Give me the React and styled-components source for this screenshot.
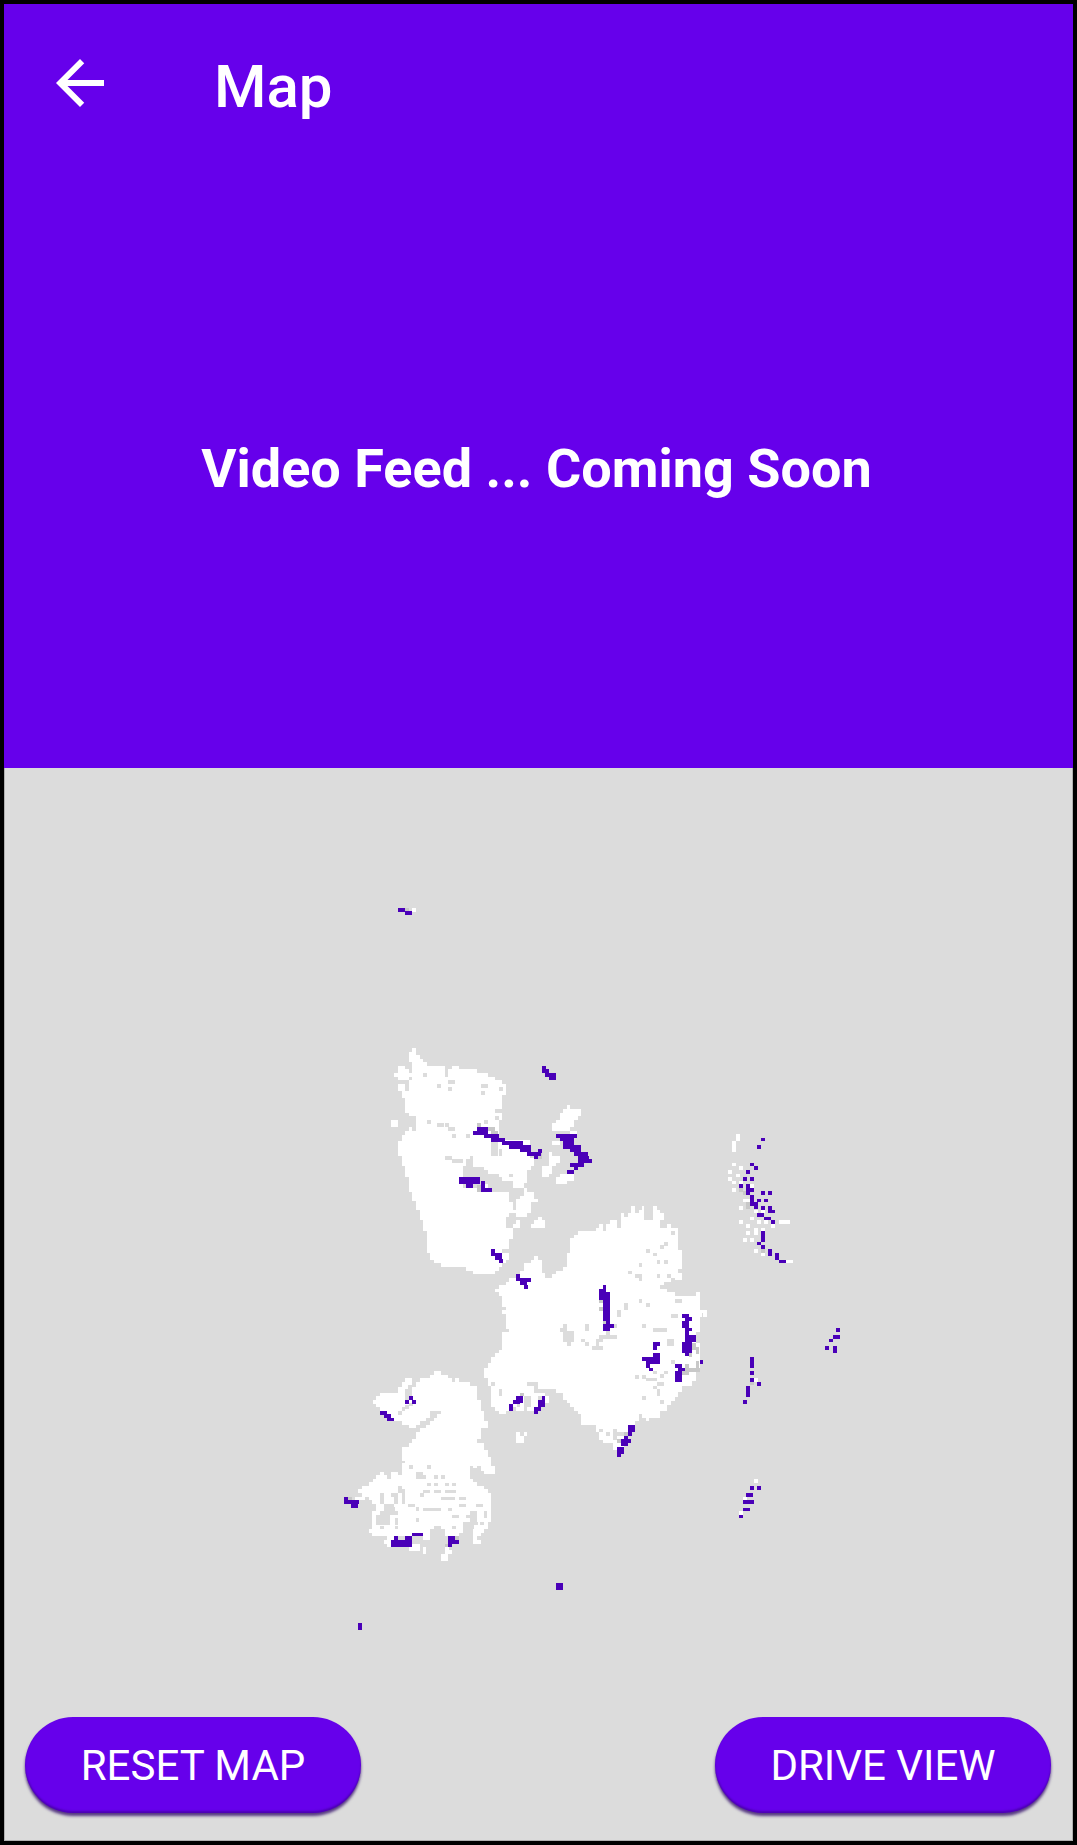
import React from "react";
import styled, { createGlobalStyle } from "styled-components";

const colors = {
  primary: "#6600eb",
  unknown: "#dcdcdc",
  free: "#ffffff",
  wall: "#4a00b8",
  stale: "#c8c8c8",
  edge: "#b0b0b0",
};

const GlobalStyle = createGlobalStyle`
  *, *::before, *::after { box-sizing: border-box; }
  body { margin: 0; background: #000; font-family: Roboto, "Noto Sans", sans-serif; }
`;

const Screen = styled.div`
  display: flex;
  flex-direction: column;
  min-height: 100vh;
  border: 4px solid #000;
  background: ${colors.unknown};
`;

const VideoPanel = styled.section`
  display: flex;
  flex-direction: column;
  background: ${colors.primary};
  color: #fff;
`;

const Toolbar = styled.header`
  display: flex;
  align-items: center;
  gap: 98px;
  height: 158px;
  padding: 0 40px;
`;

const BackButton = styled.button`
  display: flex;
  padding: 0;
  border: 0;
  background: none;
  color: inherit;
  cursor: pointer;
`;

const BackIcon = styled.svg`
  width: 72px;
  height: 72px;
  fill: currentColor;
`;

const Title = styled.h1`
  margin: 0;
  padding-top: 8px;
  font-size: 60px;
  font-weight: 500;
  line-height: 72px;
`;

const Feed = styled.div`
  display: flex;
  justify-content: center;
  height: 606px;
  padding: 275px 24px 0 20px;
`;

const FeedText = styled.p`
  margin: 0;
  font-size: 54px;
  font-weight: 700;
  line-height: 64px;
  text-align: center;
`;

const MapPanel = styled.main`
  position: relative;
  flex: 1;
  box-shadow: inset 1px 0 ${colors.edge}, inset -1px -1px ${colors.edge};
`;

const MapDrawing = styled.svg`
  display: block;
  width: 100%;
  height: auto;
  shape-rendering: crispEdges;
`;

const Actions = styled.div`
  position: absolute;
  right: 22px;
  bottom: 28px;
  left: 21px;
  display: flex;
  justify-content: space-between;
`;

const ActionButton = styled.button`
  width: 336px;
  height: 96px;
  padding: 2px 0 0;
  border: 0;
  border-radius: 48px;
  background: ${colors.primary};
  box-shadow: 0 3px 3px rgba(40, 0, 100, 0.75), inset 0 -2px 2px rgba(40, 0, 100, 0.4);
  color: #fff;
  font: 400 42px/94px Roboto, "Noto Sans", sans-serif;
  text-transform: uppercase;
  cursor: pointer;
`;

/* Each scan lists its free outline and single cells as "x y columns rows". */
const CELL = 10.7;

const toPath = (list) =>
  list
    .trim()
    .split(/\s*,\s*/)
    .map((item) => {
      const [x, y, w = 1, h = 1] = item.split(" ").map(Number);
      const width = (w * CELL).toFixed(1);
      return `M${x} ${y}h${width}v${(h * CELL).toFixed(1)}h-${width}z`;
    })
    .join("");

const scans = [
  {
    name: "north",
    x: 370,
    y: 1030,
    outline:
      "M127 55H138V75H150V86H160V97H171V108H225V140H235V118H246V108H267V118H321V129H354V140H375V151H396V162H407V194H396V237H375V248H396V270H386V330H480V385H493V407H482V420H470V458H461V474H429V453H396V442H386V431H354V420H343V410H310V378H300V388H289V407H278V474H321V485H418V517H429V539H438V549H418V560H408V594H429V626H418V658H396V668H418V690H407V700H396V711H386V722H375V732H310V722H289V711H214V700H192V690H181V668H171V604H160V571H150V540H138V513H127V486H117V442H106V407H96V378H84V334H96V315H106V303H117V290H127V303H138V258H117V248H106V205H96V183H84V162H106V183H117V150H127V97H117V66H127Z" +
      "M84 108H106V118H117V129H127V140H117V150H84V140H72V129H84Z" +
      "M63 270H84V292H63ZM591 226H600V237H633V259H624V270H612V292H600V303H558V303H547V280H558V270H570V248H580V237H591Z" +
      "M537 367H547V378H570V400H558V407H547V431H537V442H516V407H537ZM547 334H570V345H547Z" +
      "M591 431H612V453H591V462H558V442H570V431ZM461 475H470V485H493V507H504V517H482V549H470V560H438V507H450V497H461Z" +
      "M438 571H450V594H429V582H438ZM504 561H516V571H525V594H483V582H493V571H504Z",
    holes:
      "160 129, 201 162, 235 151 2 1, 235 172, 333 162 2 1, 387 172, 333 183, 171 270, 201 280 2 1, 235 292 2 1, 225 280, 246 312, 289 312, 343 270, 375 259, 225 378 2 1, 246 388 3 1, 363 335 2 4, 386 367, 386 357, 418 431, 278 407 3 2, 310 420 3 2, 343 431 4 1, 354 442 4 1, 343 453 8 1, 363 464 6 2",
    free: "343 462, 408 356 3 1, 600 303 2 1",
    stale: "321 280, 354 292 2 1, 363 303 2 1, 504 367, 504 375, 321 464, 321 474",
    walls:
      "516 108, 516 118 2 1, 525 129 2 1, 537 129 2 2, 321 292 3 1, 310 303 4 1, 343 312 4 1, 363 324 4 1, 396 334 6 1, 418 345 6 1, 450 356 3 1, 470 367 4 1, 504 357, 493 375, 558 312 6 1, 570 323 4 1, 580 334 3 1, 580 345 5 1, 600 356 3 1, 612 367 4 1, 624 378 3 1, 624 388 4 1, 600 400 4 1, 612 410, 591 420 2 1, 267 442 6 2, 289 462 2 1, 333 453 1 2, 333 474 3 1, 363 658 1 2, 375 669 2 2, 387 688",
  },
  {
    name: "center",
    x: 470,
    y: 1190,
    outline:
      "M192 198H204V210H215V248H225V263H246V252H257V242H278V231H291V188H300V145H312V135H323V123H377V113H388V102H398V123H408V102H420V91H441V113H453V70H462V80H474V70H483V48H495V70H506V59H515V48H522V91H549V48H560V59H570V70H582V91H570V113H591V102H603V113H624V180H635V270H603V286H591V307H615V318H635V318H677V307H690V360H711V381H700V370H696V381H690V425H677V458H690V540H677V574H667V588H635V606H624V620H615V632H603V645H591V662H570V683H537V692H528V683H516V672H506V692H495V705H474V745H462V770H441V780H429V760H398V750H388V727H377V705H333V672H323V662H312V651H300V640H291V630H278V608H257V598H237V608H225V618H237V640H215V651H192V662H171V651H162V662H138V651H117V662H108V672H86V662H75V651H64V588H54V565H42V534H54V520H64V500H75V490H86V480H96V427H117V416H108V372H96V360H108V351H96V318H86V307H75V297H86V286H108V275H117V264H138V252H150V242H162V220H183V210H192ZM138 726H150V737H162V758H138ZM162 726H171V737H162Z",
    holes:
      "441 102 1 1, 603 123, 582 156, 570 165, 528 178, 549 188, 560 210, 582 210, 506 220, 474 242, 495 253, 506 253 1 2, 560 252, 624 156, 591 252, 603 264, 624 237, 570 286 2 1, 582 275 2 1, 603 286 3 2, 506 328, 528 339, 462 339 1 2, 441 360 1 2, 615 328 2 1, 603 372 2 1, 516 402, 549 414 4 1, 345 402 1 2, 270 414, 280 402 1 5, 291 424 2 3, 302 435, 291 456, 333 446, 345 457, 388 435 5 1, 408 424, 377 446 2 1, 377 457, 366 468 3 1, 430 402, 591 446 2 2, 603 510, 549 542, 570 552, 495 555, 516 555, 528 563 3 1, 582 542, 560 576 2 1, 549 587, 560 598 1 2, 516 619, 570 630, 388 716, 408 726, 430 716 1 2, 430 738, 441 726 3 1, 171 576 3 1, 192 587 1 2, 204 597 3 1, 86 597 1 2, 162 618 2 3, 204 618, 140 640, 64 576 1 1",
    free: "660 512, 649 522",
    stale: "387 328, 387 351, 398 392, 150 608, 667 458 1 2, 677 470 1 2, 656 490, 677 512 1 3, 645 522, 635 534 5 1, 635 543 2 1, 462 726, 441 748",
    walls:
      "63 178 1 2, 75 189 2 2, 86 207, 138 252 1 2, 150 264 3 1, 150 275 2 1, 162 285, 398 286 1 2, 387 297 2 3, 398 307 2 8, 408 392, 398 403 2 2, 420 403, 635 372 2 1, 645 382 2 1, 635 392 2 2, 645 413 2 1, 645 424 1 1, 645 435 3 2, 635 456 3 3, 645 488, 689 510, 615 522 2 1, 624 533 2 1, 615 543 2 3, 549 457 2 1, 549 468, 549 489 2 1, 516 501 5 1, 528 511 4 1, 528 522, 537 533, 138 618 2 2, 129 630 2 1, 117 641 1 2, 215 618 1 3, 204 630 2 2, 192 651 2 1, 192 660, 474 705 2 2, 474 726, 462 738, 462 748 2 1, 453 748 2 2, 441 770 2 2, 441 790",
  },
  {
    name: "south-west",
    x: 330,
    y: 1360,
    outline:
      "M312 34H333V45H354V55H366V66H375V55H388V66H420V77H441V120H453V153H462V183H474V205H453V237H441V248H462V270H474V290H483V318H495V343H462V334H453V318H441V323H429V318H420V356H429V367H441V378H462V388H474V400H483V485H474V507H461V518H453V528H441V540H453V551H429V507H400V518H386V528H345V507H333V497H312V507H300V540H278V520H246V528H183V540H171V528H127V518H117V507H127V453H138V431H127V420H117V410H106V420H75V410H96V400H84V388H96V378H117V367H129V356H138V345H150V336H162V345H171V356H183V336H204V345H216V310H225V303H216V262H237V248H246V237H257V216H270V205H289V194H300V183H312V173H321V162H333V153H300V173H289V183H270V194H257V205H237V194H215V183H192V173H181V162H171V153H150V140H138V132H129V120H138V108H150V99H204V80H215V66H225V55H246V80H257V66H270V55H300V45H312Z",
    holes:
      "225 86 2 2, 235 75, 225 108, 237 128, 225 135, 215 141, 204 153, 237 315, 291 315, 257 336 2 1, 257 346 3 1, 312 346, 333 346, 291 368, 312 368, 345 368, 366 368, 204 378, 204 388 2 1, 279 389 2 1, 312 389 2 1, 345 389 3 1, 150 400 1 3, 183 400 2 1, 192 410 1 2, 215 400 1 3, 270 400, 333 410 4 1, 387 410 2 1, 162 431 1 1, 171 431 2 1, 235 431 2 1, 257 442, 279 443 5 1, 354 443, 387 431 2 1, 438 431 2 1, 162 442 3 1, 150 453 5 1, 138 464 4 2, 138 485 4 1, 192 474 1 2, 366 464 2 1, 409 464, 420 453 2 3, 461 453 1 2, 257 474, 400 485 4 1, 400 496 3 1, 450 485 1 1, 366 497, 150 497, 192 497 1 1, 420 474",
    free: "171 528 2 1, 162 540 2 1, 171 550, 183 474 1 3, 237 551 3 2, 278 561 1 2, 289 528, 345 561, 345 571 2 1, 333 582 2 2, 441 507 2 1, 429 518 2 1",
    stale: "54 410, 345 551, 375 528",
    walls:
      "237 108, 225 120, 246 120, 150 153 2 1, 162 162 2 1, 171 173 2 1, 42 411 1 2, 54 420 3 1, 63 432 2 1, 192 528, 183 540 5 2, 225 528 2 3, 246 518 3 1, 354 528 2 1, 354 540 3 1, 354 550, 678 669 2 2, 84 789 1 2",
  },
  {
    name: "east",
    x: 700,
    y: 1120,
    free: "108 42 1 2, 96 63 1 3, 96 128, 117 138, 84 150, 108 161, 84 171, 96 182, 117 182, 150 192, 96 204, 129 236 2 1, 117 258, 162 269, 183 269, 150 290, 117 301, 171 301, 192 301, 237 301 3 1, 213 312, 138 312, 183 323, 162 324 1 2, 138 333, 129 354, 150 354, 162 387, 183 398, 258 419 2 1, 162 774, 162 1077, 129 1130, 117 1173",
    stale: "117 204, 129 214, 138 247 1 2, 183 387, 150 785",
    walls:
      "183 53, 171 75, 150 128, 162 138, 138 150, 129 171, 150 171, 117 192, 138 192 1 3, 150 204, 183 214, 204 214, 150 225 1 3, 162 247 1 2, 171 236, 192 236, 183 258, 204 258 1 2, 213 269, 171 280 2 1, 192 290 2 1, 213 301, 183 333 1 3, 171 365, 183 376, 204 387 1 2, 225 399 1 2, 237 419 2 1, 408 624, 399 645 2 1, 387 656, 375 678, 399 678 1 2, 150 711 1 3, 150 753, 150 774, 171 786, 138 798 1 3, 129 840, 150 1098, 171 1098, 138 1119 2 1, 129 1140 3 1, 129 1163 2 1, 117 1184",
  },
  {
    name: "north-west echo",
    x: 380,
    y: 890,
    free: "97 54",
    stale: "75 54",
    walls: "54 54 2 1, 75 64 2 1",
  },
];

function Scan({ scan }) {
  return (
    <g transform={`translate(${scan.x} ${scan.y}) scale(${1 / 3})`}>
      {scan.outline && <path fill={colors.free} d={scan.outline} />}
      {scan.holes && <path fill={colors.unknown} d={toPath(scan.holes)} />}
      <path fill={colors.free} d={toPath(scan.free)} />
      <path fill={colors.stale} d={toPath(scan.stale)} />
      <path fill={colors.wall} d={toPath(scan.walls)} />
    </g>
  );
}

export default function App() {
  return (
    <>
      <GlobalStyle />
      <Screen>
        <VideoPanel>
          <Toolbar>
            <BackButton type="button" aria-label="Back">
              <BackIcon viewBox="0 0 24 24" aria-hidden="true">
                <path d="M20 11H7.83l5.59-5.59L12 4l-8 8 8 8 1.41-1.41L7.83 13H20z" />
              </BackIcon>
            </BackButton>
            <Title>Map</Title>
          </Toolbar>
          <Feed>
            <FeedText>Video Feed ... Coming Soon</FeedText>
          </Feed>
        </VideoPanel>
        <MapPanel>
          <MapDrawing viewBox="4 768 1069 1073" role="img" aria-label="Map">
            {scans.map((scan) => (
              <Scan key={scan.name} scan={scan} />
            ))}
          </MapDrawing>
          <Actions>
            <ActionButton type="button">Reset Map</ActionButton>
            <ActionButton type="button">Drive View</ActionButton>
          </Actions>
        </MapPanel>
      </Screen>
    </>
  );
}
